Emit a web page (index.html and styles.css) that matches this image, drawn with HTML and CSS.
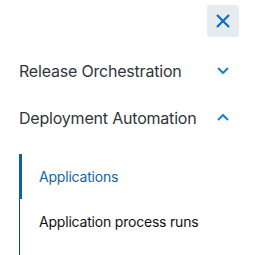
FILE: index.html
```html
<!DOCTYPE html>
<html lang="en">
<head>
  <meta charset="UTF-8" />
  <title>Navigation</title>
  <link rel="stylesheet" href="styles.css">
</head>
<body>
  <aside class="side-nav">
    <div class="close-row">
      <button class="close-btn" aria-label="Close">
        <svg width="14" height="14" viewBox="0 0 14 14">
          <path d="M1 1 L13 13 M13 1 L1 13" stroke="#0f6cbd" stroke-width="2.2" fill="none" />
        </svg>
      </button>
    </div>

    <div class="nav-group">
      <span>Release Orchestration</span>
      <span class="chevron">
        <svg width="12" height="7" viewBox="0 0 12 7">
          <path d="M1 1 L6 6 L11 1" stroke="#1a7fd1" stroke-width="2" fill="none" />
        </svg>
      </span>
    </div>

    <div class="nav-group">
      <span>Deployment Automation</span>
      <span class="chevron">
        <svg width="12" height="7" viewBox="0 0 12 7">
          <path d="M1 6 L6 1 L11 6" stroke="#1a7fd1" stroke-width="2" fill="none" />
        </svg>
      </span>
    </div>

    <ul class="sub-list">
      <li class="active"><a href="#">Applications</a></li>
      <li><a href="#">Application process runs</a></li>
    </ul>
  </aside>
</body>
</html>
```

FILE: styles.css
```css
body {
  margin: 0;
  background: #fff;
  font-family: 'Inter', 'Liberation Sans', sans-serif;
  letter-spacing: -0.2px;
  overflow: hidden;
}

.side-nav {
  padding: 5px 16px 0 19px;
}

.close-row {
  display: flex;
  justify-content: flex-end;
}

.close-btn {
  width: 32px;
  height: 32px;
  border: none;
  border-radius: 3px;
  background: #e6ebef;
  display: flex;
  align-items: center;
  justify-content: center;
  padding: 0;
}

.nav-group {
  height: 47px;
  display: flex;
  align-items: center;
  justify-content: space-between;
  font-size: 16px;
  color: #30363c;
}

.close-row + .nav-group {
  margin-top: 10px;
}

.chevron {
  width: 32px;
  display: flex;
  justify-content: center;
}

/* thin rail down the left of the sub items */
.sub-list {
  list-style: none;
  margin: 13px 0 0 0;
  padding: 0 0 11px 0;
  border-left: 1px solid #1c3f5e;
}

.sub-list li {
  height: 45px;
  display: flex;
  align-items: center;
  padding-left: 19px;
  font-size: 14px;
}

.sub-list li a {
  color: #111;
  text-decoration: none;
}

.sub-list li.active {
  margin-left: -1px;
  border-left: 3px solid #0f5f9e;
  padding-left: 17px;
}

.sub-list li.active a {
  color: #1565a6;
}
```
